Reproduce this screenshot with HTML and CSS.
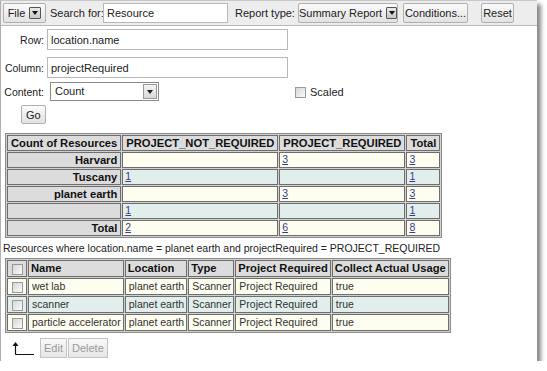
FILE: index.html
```html
<!DOCTYPE html>
<html lang="en">
<head>
  <meta charset="UTF-8">
  <title>Summary Report</title>
  <link rel="stylesheet" href="styles.css">
</head>
<body>

<div class="window">
  <div class="toolbar">
    <span class="tb-btn file-btn">File <span class="drop"></span></span>
    <span class="tb-label search-label">Search for:</span>
    <input type="text" class="search" value="Resource">
    <span class="tb-label report-label">Report type:</span>
    <span class="tb-btn report-btn">Summary Report <span class="drop"></span></span>
    <span class="tb-btn cond-btn">Conditions...</span>
    <span class="tb-btn reset-btn">Reset</span>
  </div>

  <div class="params">
    <div class="param-row">
      <label class="param-label">Row:</label>
      <input type="text" class="field" value="location.name">
    </div>
    <div class="param-row">
      <label class="param-label">Column:</label>
      <input type="text" class="field" value="projectRequired">
    </div>
    <div class="param-row content-row">
      <label class="param-label">Content:</label>
      <div class="select">Count <span class="select-arrow"></span></div>
      <label class="scaled"><input type="checkbox" class="box"> Scaled</label>
    </div>
    <button class="go-btn">Go</button>
  </div>

  <table class="grid summary">
    <tr>
      <th>Count of Resources</th>
      <th>PROJECT_NOT_REQUIRED</th>
      <th>PROJECT_REQUIRED</th>
      <th>Total</th>
    </tr>
    <tr class="odd">
      <th class="row-head">Harvard</th>
      <td></td>
      <td><a href="#">3</a></td>
      <td><a href="#">3</a></td>
    </tr>
    <tr class="even">
      <th class="row-head">Tuscany</th>
      <td><a href="#">1</a></td>
      <td></td>
      <td><a href="#">1</a></td>
    </tr>
    <tr class="odd">
      <th class="row-head">planet earth</th>
      <td></td>
      <td><a href="#">3</a></td>
      <td><a href="#">3</a></td>
    </tr>
    <tr class="even">
      <th class="row-head"></th>
      <td><a href="#">1</a></td>
      <td></td>
      <td><a href="#">1</a></td>
    </tr>
    <tr class="odd">
      <th class="row-head">Total</th>
      <td><a href="#">2</a></td>
      <td><a href="#">6</a></td>
      <td><a href="#">8</a></td>
    </tr>
  </table>

  <p class="caption">Resources where location.name = planet earth and projectRequired = PROJECT_REQUIRED</p>

  <table class="grid detail">
    <tr>
      <th class="check-col"><input type="checkbox" class="box"></th>
      <th>Name</th>
      <th>Location</th>
      <th>Type</th>
      <th>Project Required</th>
      <th>Collect Actual Usage</th>
    </tr>
    <tr class="odd">
      <td class="check-col"><input type="checkbox" class="box"></td>
      <td>wet lab</td>
      <td>planet earth</td>
      <td>Scanner</td>
      <td>Project Required</td>
      <td>true</td>
    </tr>
    <tr class="even">
      <td class="check-col"><input type="checkbox" class="box"></td>
      <td>scanner</td>
      <td>planet earth</td>
      <td>Scanner</td>
      <td>Project Required</td>
      <td>true</td>
    </tr>
    <tr class="odd">
      <td class="check-col"><input type="checkbox" class="box"></td>
      <td>particle accelerator</td>
      <td>planet earth</td>
      <td>Scanner</td>
      <td>Project Required</td>
      <td>true</td>
    </tr>
  </table>

  <div class="actions">
    <svg width="24" height="13" viewBox="0 0 24 13">
      <path d="M3.5 12.5 V2 M3.5 12.5 H22" stroke="#111" stroke-width="1.2" fill="none"/>
      <path d="M0.5 4 L3.5 0 L6.5 4 Z" fill="#111"/>
    </svg>
    <span class="act-group">
      <button class="act-btn edit-btn" disabled>Edit</button><button class="act-btn" disabled>Delete</button>
    </span>
  </div>
</div>

</body>
</html>
```

FILE: styles.css
```css
body {
  margin: 0;
  background: #fff;
  font-family: 'Liberation Sans', Arial, sans-serif;
  font-size: 10.5px;
  color: #222;
}

.window {
  width: 537px;
  height: 361px;
  border-left: 1px solid #b0b0b0;
  border-top: 1px solid #c8c8c8;
  box-shadow: 4px 4px 4px #8a8a8a;
  background: #fff;
  box-sizing: border-box;
}

/* toolbar */
.toolbar {
  display: flex;
  align-items: center;
  height: 25px;
  padding: 0 2px;
  background: #ededed;
  border-bottom: 1px solid #b8b8b8;
  box-sizing: border-box;
  white-space: nowrap;
  font-size: 11px;
}

.tb-btn {
  display: inline-flex;
  align-items: center;
  justify-content: center;
  height: 20px;
  border: 1px solid #b0b0b0;
  border-radius: 2px;
  background: linear-gradient(#fbfbfb, #e2e2e2);
  box-sizing: border-box;
  color: #222;
  flex: none;
}

.file-btn {
  width: 43px;
  margin-right: 4px;
}

.report-btn {
  width: 100px;
  margin-right: 5px;
}

.cond-btn {
  width: 65px;
  margin-right: 13px;
}

.reset-btn {
  width: 33px;
}

.drop {
  display: inline-block;
  position: relative;
  width: 12px;
  height: 12px;
  margin-left: 4px;
  border: 1px solid #555;
  border-radius: 1px;
  background: linear-gradient(#e8e8e8, #c8c8c8);
  box-sizing: border-box;
}

.drop::after {
  content: "";
  position: absolute;
  left: 2px;
  top: 3px;
  border-left: 3px solid transparent;
  border-right: 3px solid transparent;
  border-top: 4px solid #111;
}

.search-label {
  width: 53px;
}

.report-label {
  width: 63px;
  margin-left: 7px;
}

.search {
  width: 125px;
  height: 20px;
  flex: none;
}

input[type="text"] {
  border: 1px solid #b8b8b8;
  padding: 0 3px;
  font-family: inherit;
  font-size: 11px;
  color: #222;
  box-sizing: border-box;
  margin: 0;
}

/* parameters */
.params {
  padding-top: 3px;
}

.param-row {
  display: flex;
  align-items: center;
  margin-bottom: 7px;
}

.param-row + .param-row {
  margin-bottom: 4px;
}

.param-label {
  width: 43px;
  text-align: right;
  margin-right: 3px;
}

.field {
  width: 241px;
  height: 21px;
}

.content-row {
  margin-bottom: 6px;
}

.select {
  position: relative;
  width: 109px;
  height: 19px;
  margin-left: 3px;
  padding-left: 4px;
  border: 1px solid #8a8a8a;
  line-height: 17px;
  font-size: 11px;
  box-sizing: border-box;
}

.select-arrow {
  position: absolute;
  right: 1px;
  top: 1px;
  width: 14px;
  height: 15px;
  border: 1px solid #999;
  background: linear-gradient(#f4f4f4, #d8d8d8);
  box-sizing: border-box;
}

.select-arrow::after {
  content: "";
  position: absolute;
  left: 3px;
  top: 5px;
  border-left: 3px solid transparent;
  border-right: 3px solid transparent;
  border-top: 4px solid #222;
}

.scaled {
  display: flex;
  align-items: center;
  margin: 1px 0 0 136px;
  font-size: 11px;
}

.box {
  appearance: none;
  width: 11px;
  height: 11px;
  margin: 0 4px 0 0;
  border: 1px solid #9a9a9a;
  background: linear-gradient(135deg, #d6d6d6, #fafafa);
  box-sizing: border-box;
  vertical-align: middle;
}

.go-btn {
  height: 19px;
  margin-left: 20px;
  padding: 0 4px;
  border: 1px solid #b0b0b0;
  border-radius: 2px;
  background: linear-gradient(#fbfbfb, #e2e2e2);
  font-family: inherit;
  font-size: 11px;
  color: #222;
}

/* tables */
.grid {
  border: 1px solid #8c8c8c;
  border-spacing: 1px;
  background: #d0d0d0;
  margin-left: 4px;
}

.grid th,
.grid td {
  border: 1px solid #6e6e6e;
  height: 14px;
  padding: 0 2px;
  line-height: 14px;
  white-space: nowrap;
}

.grid th {
  background: #dcdcdc;
  color: #111;
  font-weight: bold;
  font-size: 11.2px;
}

.summary {
  margin-top: 9px;
}

.summary th {
  padding: 0 3px;
}

.summary td {
  text-align: left;
  height: 13.7px;
  line-height: 13.7px;
}

.row-head {
  text-align: right;
}

.odd td {
  background: #fdfdf0;
}

.even td {
  background: #e1eeeb;
}

.grid a {
  color: #3b3b8f;
}

.caption {
  margin: 4px 0 4px 2px;
}

.detail th,
.detail td {
  height: 15px;
  line-height: 15px;
}

.detail th {
  text-align: left;
  padding: 0 2px;
}

.detail td {
  padding: 0 2px 0 3px;
  color: #333;
}

.detail .check-col {
  padding: 0 3px 0 4px;
}

.detail .check-col .box {
  margin: 0;
}

/* bottom actions */
.actions {
  display: flex;
  align-items: center;
  margin: 5px 0 0 11px;
}

.act-group {
  margin-left: 4px;
}

.act-btn {
  height: 20px;
  padding: 0 3px;
  border: 1px solid #c4c4c4;
  background: linear-gradient(#f8f8f8, #e6e6e6);
  font-family: inherit;
  font-size: 11px;
  color: #9a9a9a;
}

.edit-btn {
  margin-right: 1px;
}
```
